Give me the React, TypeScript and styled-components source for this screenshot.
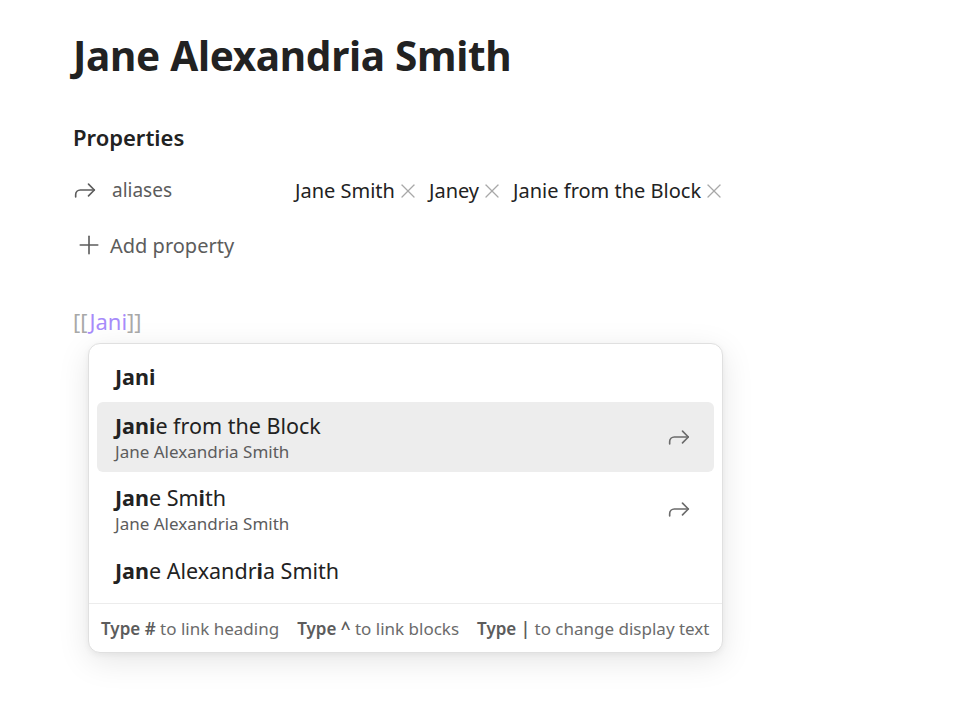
import React from 'react';
import styled, { createGlobalStyle } from 'styled-components';
import { Forward, Plus, X } from 'lucide-react';

const GlobalStyle = createGlobalStyle`
  html, body {
    margin: 0;
    padding: 0;
    background: #ffffff;
  }
  body {
    font-family: 'Noto Sans', 'Open Sans', sans-serif;
    color: #222222;
  }
`;

const Page = styled.div`
  width: 973px;
  height: 701px;
  padding: 26px 0 0 73px;
  box-sizing: border-box;
  overflow: hidden;
`;

const Title = styled.h1`
  margin: 0;
  font-size: 40.5px;
  font-weight: 700;
  line-height: 60px;
  letter-spacing: -0.3px;
  color: #222222;
`;

const SectionHeading = styled.h2`
  margin: 35px 0 0;
  font-size: 22px;
  font-weight: 600;
  line-height: 32px;
  color: #222222;
`;

const PropertyRow = styled.div`
  display: grid;
  grid-template-columns: 222px 1fr;
  align-items: center;
  height: 38px;
  margin-top: 18px;
`;

const PropertyKey = styled.div`
  display: flex;
  align-items: center;
  gap: 13px;
  margin-left: -2px;
  color: #5c5c5c;
  font-size: 19px;
`;

const Pills = styled.div`
  display: flex;
  align-items: center;
  gap: 9px;
`;

const Pill = styled.span`
  display: inline-flex;
  align-items: center;
  gap: 1px;
  font-size: 20px;
  color: #222222;

  svg {
    margin-top: 1px;
  }
`;

const AddProperty = styled.div`
  display: flex;
  align-items: center;
  gap: 6px;
  margin-top: 17px;
  padding-left: 1px;
  height: 38px;
  color: #5c5c5c;
  font-size: 20px;
`;

const LinkLine = styled.div`
  margin-top: 42px;
  font-size: 22px;
  line-height: 30px;
`;

const Bracket = styled.span`
  color: #a8a8a8;
`;

const LinkText = styled.span`
  color: #a78bfa;
`;

const Popup = styled.div`
  margin: 7px 0 0 15px;
  width: 635px;
  box-sizing: border-box;
  background: #ffffff;
  border: 1px solid #e0e0e0;
  border-radius: 12px;
  box-shadow: 0 8px 32px rgba(0, 0, 0, 0.1), 0 2px 6px rgba(0, 0, 0, 0.05);
  overflow: hidden;
`;

const SuggestionList = styled.div`
  padding: 8px 8px 7px;
`;

const Suggestion = styled.div<{ $selected?: boolean; $tall?: boolean }>`
  display: flex;
  align-items: center;
  justify-content: space-between;
  padding: 0 21px 0 18px;
  height: ${(p) => (p.$tall ? '70px' : '50px')};
  margin-bottom: ${(p) => (p.$tall ? '2px' : '0')};
  border-radius: 6px;
  background: ${(p) => (p.$selected ? '#ededed' : 'transparent')};
`;

const SuggestionText = styled.div`
  display: flex;
  flex-direction: column;
`;

const SuggestionTitle = styled.div`
  font-size: 21.5px;
  line-height: 28px;
  color: #222222;

  b {
    font-weight: 700;
  }
`;

const SuggestionNote = styled.div`
  font-size: 17px;
  line-height: 23px;
  color: #5c5c5c;
`;

const Footer = styled.div`
  display: flex;
  gap: 18px;
  padding: 0 12px;
  height: 48px;
  align-items: center;
  border-top: 1px solid #ececec;
  font-size: 17px;
  color: #6b6b6b;
  white-space: nowrap;

  b {
    font-weight: 600;
    color: #5c5c5c;
  }
`;

const App: React.FC = () => {
  return (
    <>
      <GlobalStyle />
      <Page>
        <Title>Jane Alexandria Smith</Title>
        <SectionHeading>Properties</SectionHeading>
        <PropertyRow>
          <PropertyKey>
            <Forward size={28} strokeWidth={1.4} color="#5c5c5c" />
            aliases
          </PropertyKey>
          <Pills>
            <Pill>
              Jane Smith
              <X size={24} strokeWidth={1.3} color="#a8a8a8" />
            </Pill>
            <Pill>
              Janey
              <X size={24} strokeWidth={1.3} color="#a8a8a8" />
            </Pill>
            <Pill>
              Janie from the Block
              <X size={24} strokeWidth={1.3} color="#a8a8a8" />
            </Pill>
          </Pills>
        </PropertyRow>
        <AddProperty>
          <Plus size={30} strokeWidth={1.3} color="#5c5c5c" />
          Add property
        </AddProperty>
        <LinkLine>
          <Bracket>[[</Bracket>
          <LinkText>Jani</LinkText>
          <Bracket>]]</Bracket>
        </LinkLine>
        <Popup>
          <SuggestionList>
            <Suggestion>
              <SuggestionTitle>
                <b>Jani</b>
              </SuggestionTitle>
            </Suggestion>
            <Suggestion $selected $tall>
              <SuggestionText>
                <SuggestionTitle>
                  <b>Jani</b>e from the Block
                </SuggestionTitle>
                <SuggestionNote>Jane Alexandria Smith</SuggestionNote>
              </SuggestionText>
              <Forward size={28} strokeWidth={1.4} color="#6b6b6b" />
            </Suggestion>
            <Suggestion $tall>
              <SuggestionText>
                <SuggestionTitle>
                  <b>Jan</b>e Sm<b>i</b>th
                </SuggestionTitle>
                <SuggestionNote>Jane Alexandria Smith</SuggestionNote>
              </SuggestionText>
              <Forward size={28} strokeWidth={1.4} color="#6b6b6b" />
            </Suggestion>
            <Suggestion>
              <SuggestionTitle>
                <b>Jan</b>e Alexandr<b>i</b>a Smith
              </SuggestionTitle>
            </Suggestion>
          </SuggestionList>
          <Footer>
            <span>
              <b>Type #</b> to link heading
            </span>
            <span>
              <b>Type ^</b> to link blocks
            </span>
            <span>
              <b>Type |</b> to change display text
            </span>
          </Footer>
        </Popup>
      </Page>
    </>
  );
};

export default App;
